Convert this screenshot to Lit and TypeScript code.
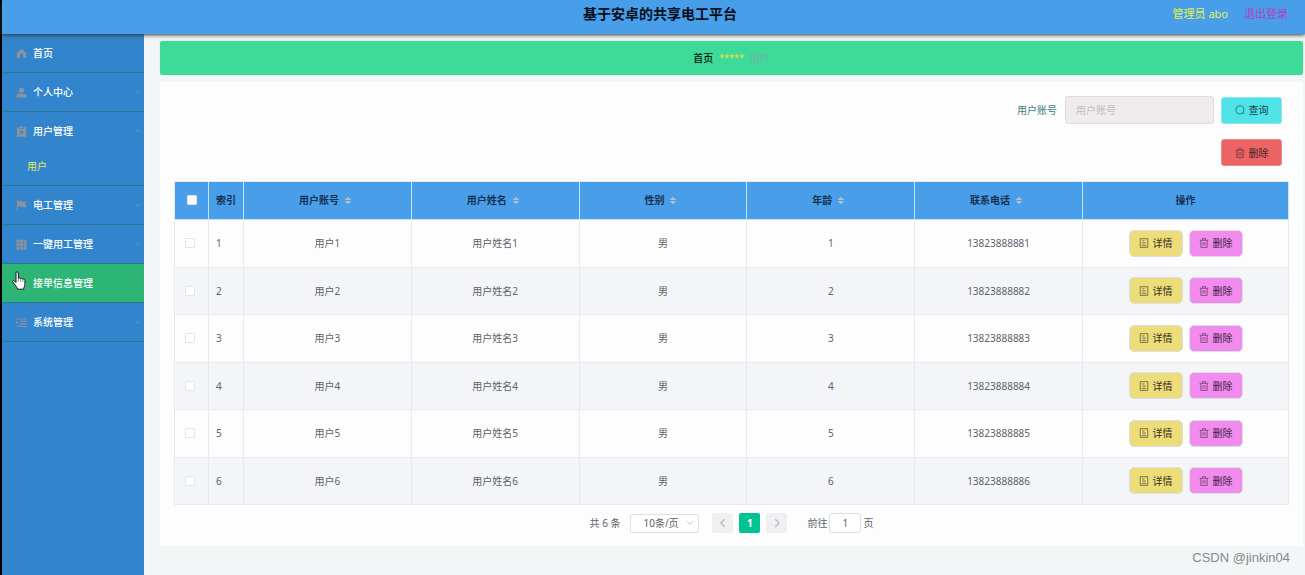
import { LitElement, html, css, svg, nothing } from "lit";
import { customElement, property, state } from "lit/decorators.js";
import { classMap } from "lit/directives/class-map.js";

const icons: Record<string, unknown> = {
  home: svg`<path fill="currentColor" d="M6 1 1 5.4V11h3.4V7.6a1.6 1.6 0 0 1 3.2 0V11H11V5.4z"/>`,
  user: svg`<g fill="currentColor"><circle cx="6" cy="3.6" r="2.8"/><path d="M.6 11.4V9.6C.6 8.2 1.8 7.4 3 7.4h6c1.200 0 2.400.8 2.400 2.200v1.800z"/></g>`,
  claim: svg`<path fill="currentColor" fill-rule="evenodd" d="M1 1.400h2.200V3h5.600V1.400H11V11.600H1zM4 5.100 5.300 6.800 4 8.500l.7.6L6 7.500l1.300 1.600.7-.6-1.300-1.700L8 5.100l-.7-.6L6 6.100 4.700 4.500z"/><path fill="currentColor" d="M4 .4h4v1.800H4z"/>`,
  flag: svg`<path fill="currentColor" d="M1 .6h1.200v.4H7v1h4.400L9.800 5l1.600 3H6V7H2.200v4.800H1z"/>`,
  grid: svg`<path fill="currentColor" d="M.5.800h3.200V4H.5zM4.400.800h3.200V4H4.400zM8.300.800h3.200V4H8.300zM.5 4.600h3.200v3.200H.5zM4.400 4.600h3.200v3.200H4.400zM8.300 4.600h3.200v3.200H8.300zM.5 8.400h3.200v3.200H.5zM4.400 8.400h3.200v3.200H4.400zM8.300 8.400h3.200v3.200H8.300z"/>`,
  goods: svg`<path fill="currentColor" d="M1 3.500h10l.5 8H.5z"/>`,
  list: svg`<path fill="currentColor" d="M.5 1.500h11v1.200H.5zM4.500 4.200h7v1.200h-7zM4.500 6.900h7v1.200h-7zM.5 9.600h11v1.200H.5zM.5 4.200 3 6.100.5 8z"/>`,
  down: svg`<path fill="none" stroke="currentColor" stroke-width="1.300" d="m1.500 3.500 4.500 4.500 4.500-4.500"/>`,
  up: svg`<path fill="none" stroke="currentColor" stroke-width="1.300" d="m1.500 8 4.500-4.500L10.500 8"/>`,
  left: svg`<path fill="none" stroke="currentColor" stroke-width="1.500" d="M8 1.500 3.500 6 8 10.500"/>`,
  right: svg`<path fill="none" stroke="currentColor" stroke-width="1.500" d="M4 1.500 8.500 6 4 10.500"/>`,
  search: svg`<g fill="none" stroke="currentColor" stroke-width=".9"><circle cx="6" cy="5.800" r="4.800"/><path d="m9.400 9.200 1.800 1.800"/></g>`,
  trash: svg`<path fill="none" stroke="currentColor" stroke-width=".9" d="M.8 2.800h10.400M4.200 2.500V.8h3.600v1.700M2.200 3v8.300h7.600V3M4.800 5v4.200M7.200 5v4.200"/>`,
  doc: svg`<path fill="none" stroke="currentColor" stroke-width=".9" d="M1.500.8h9v10.400h-9zM4 3.500h2.500M4 6h4M3.500 8.800h5"/>`,
  sort: svg`<path fill="currentColor" d="M6 .2 11 5.200H1zM6 11.800 1 6.800h10z"/>`,
};

@customElement("ui-icon")
export class UiIcon extends LitElement {
  static styles = css`
    :host { display: inline-flex; flex: none; width: 10px; height: 10px; }
    svg { width: 100%; height: 100%; display: block; }
  `;
  @property() name = "home";
  render() {
    return html`<svg viewBox="0 0 12 12" aria-hidden="true">${icons[this.name]}</svg>`;
  }
}

interface MenuItem { icon: string; label: string; children?: string[]; }

const menu: MenuItem[] = [
  { icon: "home", label: "首页" },
  { icon: "user", label: "个人中心", children: [] },
  { icon: "claim", label: "用户管理", children: ["用户"] },
  { icon: "flag", label: "电工管理", children: [] },
  { icon: "grid", label: "一键用工管理", children: [] },
  { icon: "goods", label: "接单信息管理", children: [] },
  { icon: "list", label: "系统管理", children: [] },
];

const columns = ["用户账号", "用户姓名", "性别", "年龄", "联系电话"];
const rows = [1, 2, 3, 4, 5, 6].map((n) => ({
  index: n,
  account: `用户${n}`,
  name: `用户姓名${n}`,
  gender: "男",
  age: n,
  phone: `1382388888${n}`,
}));

@customElement("app-root")
export class AppRoot extends LitElement {
  static styles = css`
    :host {
      display: flex;
      flex-direction: column;
      position: relative;
      min-height: 100vh;
      box-sizing: border-box;
      border-left: 2px solid #000;
      background: #f2f6f7;
      color: #606266;
      font: 10px/16px "Noto Sans", "Noto Sans CJK SC", sans-serif;
    }
    * { box-sizing: border-box; }
    button, input, select { font: inherit; margin: 0; }
    button { cursor: pointer; }
    a { text-decoration: none; color: inherit; }

    .top {
      display: grid;
      grid-template-columns: 1fr auto 1fr;
      align-items: center;
      height: 34px;
      padding: 0 17px 6px 30px;
      background: #489ee9;
      box-shadow: 0 1px 4px #333;
      z-index: 1;
    }
    .title { grid-column: 2; margin: 0; color: #07101c; font-size: 14px; line-height: 20px; font-weight: 700; }
    .account { display: flex; justify-content: flex-end; gap: 16px; font-size: 11px; }
    .who { color: #e4f24a; }
    .logout { color: #b63fc0; }

    .body { display: flex; flex: 1; }
    .side { width: 142px; flex: none; background: #3285cd; }
    .menu, .sub { list-style: none; margin: 0; padding: 0; }
    .group { border-bottom: 1px solid #2b7791; }
    .entry {
      display: flex;
      align-items: center;
      gap: 6px;
      width: 100%;
      height: 38px;
      padding: 0 2px 0 14px;
      border: 0;
      background: none;
      color: #fff;
      font-weight: 500;
      text-align: left;
    }
    .entry .glyph { width: 11px; height: 11px; color: #8e929c; }
    .entry .arrow { width: 8px; height: 8px; margin-left: auto; color: #6b97bd; }
    .hover { background: #2cb574; }
    .entry:is(.hover *) .arrow { color: #5c9f84; }
    .subentry { display: block; padding: 8px 25px 11px; color: #e2ee62; }

    .main { flex: 1; min-width: 0; padding: 7px 2px 29px 16px; }
    .crumbs {
      display: flex;
      align-items: center;
      justify-content: center;
      gap: 6px;
      height: 34px;
      margin-bottom: 7px;
      border-radius: 3px;
      background: #3dda98;
      box-shadow: 0 0 1px #8aa69a;
    }
    .here { color: #04140d; font-weight: 500; }
    .stars { color: #e8de4c; font-size: 9px; font-weight: 500; }
    .leaf { color: #7cabb4; }

    .card { padding: 14px 14px 13px; background: #fdfdfe; }
    .search { display: flex; align-items: center; justify-content: flex-end; padding-right: 7px; }
    .search label { margin-right: 8px; color: #3a7f7c; }
    .field {
      width: 149px;
      height: 28px;
      margin-right: 7px;
      padding: 0 10px;
      border: 1px solid #dedbe2;
      border-radius: 3px;
      background: #f0ecec;
      color: #606266;
    }
    .field::placeholder { color: #b9bdc6; }
    .tools { display: flex; justify-content: flex-end; padding: 15px 7px 15px 0; }
    .btn {
      display: inline-flex;
      align-items: center;
      justify-content: center;
      gap: 4px;
      height: 27px;
      width: 61px;
      padding: 0;
      border: 1px solid #dcdfe6;
      border-radius: 3px;
      color: #222;
    }
    .btn ui-icon { opacity: 0.8; }
    .query { background: #4fe5e8; border-color: #8fe6ea; color: #173f49; }
    .remove { background: #ec6464; border-color: #eb8a8c; color: #44242a; }
    .act { width: 54px; border-radius: 5px; }
    .detail { background: #ecdd7a; color: #33301c; }
    .drop { background: #f18bee; color: #412544; }

    .grid {
      width: 100%;
      table-layout: fixed;
      border-spacing: 0;
      border-left: 1px solid #e6e9f0;
      border-top: 1px solid #e6e9f0;
    }
    .check { width: 34px; }
    .no { width: 35px; }
    .ops { width: 206px; }
    th, td { padding: 0 0 1px; text-align: center; border-right: 1px solid #e8eaf0; border-bottom: 1px solid #e8eaf0; }
    th { height: 38px; background: #489ee9; color: #16304f; font-weight: 700; border-color: #c8e2f6; }
    td { height: 48px; }
    tr:nth-child(even) td { height: 47px; background: #f3f5f9; }
    .idx { text-align: left; padding-left: 7px; }
    .head { display: flex; align-items: center; justify-content: center; gap: 5px; padding-right: 4px; }
    .head ui-icon { width: 8px; height: 9px; color: #b4bfcc; }
    .acts { display: flex; justify-content: center; gap: 6px; }
    .tick {
      appearance: none;
      display: block;
      width: 10px;
      height: 10px;
      margin: 0 auto 0 10px;
      border: 1px solid #e2e5eb;
      border-radius: 1px;
      background: #fff;
    }
    .tick:checked { background: #00c292; }
    th .tick { margin: 0 auto; }

    .pager { display: flex; align-items: center; justify-content: center; padding-top: 8px; }
    .size { display: grid; align-items: center; margin: 0 13px 0 10px; }
    .size select, .size ui-icon { grid-area: 1 / 1; }
    .size select {
      appearance: none;
      width: 69px;
      height: 19px;
      padding: 0 0 0 12px;
      border: 1px solid #dcdfe6;
      border-radius: 2px;
      background: #fff;
      color: #606266;
    }
    .size ui-icon { justify-self: end; width: 8px; height: 8px; margin-right: 5px; color: #b4b8c0; pointer-events: none; }
    .pages { display: flex; gap: 6px; margin-right: 20px; }
    .page {
      display: flex;
      align-items: center;
      justify-content: center;
      width: 21px;
      height: 20px;
      padding: 0;
      border: 0;
      border-radius: 2px;
      background: #f0f0f2;
      color: #b4b8c0;
    }
    .current { background: #00c292; color: #fff; font-weight: 700; }
    .jump { display: flex; align-items: center; gap: 2px; }
    .jump input {
      width: 32px;
      height: 20px;
      padding: 0;
      border: 1px solid #dcdfe6;
      border-radius: 3px;
      background: #fff;
      color: #606266;
      text-align: center;
    }

    .pointer { position: absolute; left: 10px; top: 271px; width: 14px; height: 19px; z-index: 2; pointer-events: none; }
    .mark {
      position: absolute;
      right: 15px;
      bottom: 7px;
      color: #85888b;
      font: 13px/20px "Liberation Sans", Arial, sans-serif;
    }
  `;

  @state() private hovered = 5;
  @state() private open = new Set([2]);

  private toggle(i: number) {
    const next = new Set(this.open);
    next.has(i) ? next.delete(i) : next.add(i);
    this.open = next;
  }

  private renderItem(item: MenuItem, i: number) {
    const opened = this.open.has(i);
    return html`<li
      class=${classMap({ group: true, hover: this.hovered === i })}
      @mouseenter=${() => (this.hovered = i)}
    >
      ${item.children
        ? html`<button class="entry" aria-expanded=${opened} @click=${() => this.toggle(i)}>
            <ui-icon class="glyph" name=${item.icon}></ui-icon>${item.label}
            <ui-icon class="arrow" name=${opened ? "up" : "down"}></ui-icon>
          </button>`
        : html`<a class="entry" href="#home"><ui-icon class="glyph" name=${item.icon}></ui-icon>${item.label}</a>`}
      ${opened && item.children?.length
        ? html`<ul class="sub">
            ${item.children.map((c) => html`<li><a class="subentry" href="#users">${c}</a></li>`)}
          </ul>`
        : nothing}
    </li>`;
  }

  render() {
    return html`
      <header class="top">
        <h1 class="title">基于安卓的共享电工平台</h1>
        <div class="account"><span class="who">管理员 abo</span><a class="logout" href="#logout">退出登录</a></div>
      </header>
      <div class="body">
        <nav class="side">
          <ul class="menu">${menu.map((m, i) => this.renderItem(m, i))}</ul>
        </nav>
        <main class="main">
          <div class="crumbs">
            <a class="here" href="#home">首页</a><span class="stars">*****</span><span class="leaf">用户</span>
          </div>
          <section class="card">
            <form class="search" @submit=${(e: Event) => e.preventDefault()}>
              <label for="account">用户账号</label>
              <input class="field" id="account" placeholder="用户账号" />
              <button class="btn query"><ui-icon name="search"></ui-icon>查询</button>
            </form>
            <div class="tools">
              <button class="btn remove"><ui-icon name="trash"></ui-icon>删除</button>
            </div>
            <table class="grid">
              <colgroup>
                <col class="check" /><col class="no" />
                ${columns.map(() => html`<col />`)}
                <col class="ops" />
              </colgroup>
              <thead>
                <tr>
                  <th><input class="tick" type="checkbox" aria-label="全选" /></th>
                  <th>索引</th>
                  ${columns.map((c) => html`<th><div class="head">${c}<ui-icon name="sort"></ui-icon></div></th>`)}
                  <th>操作</th>
                </tr>
              </thead>
              <tbody>
                ${rows.map(
                  (r) => html`<tr>
                    <td><input class="tick" type="checkbox" aria-label=${r.account} /></td>
                    <td class="idx">${r.index}</td>
                    <td>${r.account}</td>
                    <td>${r.name}</td>
                    <td>${r.gender}</td>
                    <td>${r.age}</td>
                    <td>${r.phone}</td>
                    <td>
                      <div class="acts">
                        <button class="btn act detail"><ui-icon name="doc"></ui-icon>详情</button>
                        <button class="btn act drop"><ui-icon name="trash"></ui-icon>删除</button>
                      </div>
                    </td>
                  </tr>`
                )}
              </tbody>
            </table>
            <div class="pager">
              <span>共 6 条</span>
              <div class="size">
                <select aria-label="每页条数"><option>10条/页</option></select>
                <ui-icon name="down"></ui-icon>
              </div>
              <div class="pages">
                <button class="page" aria-label="上一页"><ui-icon name="left"></ui-icon></button>
                <button class="page current">1</button>
                <button class="page" aria-label="下一页"><ui-icon name="right"></ui-icon></button>
              </div>
              <div class="jump"><label for="goto">前往</label><input id="goto" value="1" /><span>页</span></div>
            </div>
          </section>
        </main>
      </div>
      <svg class="pointer" viewBox="0 0 14 19" aria-hidden="true">
        <path fill="#fff" stroke="#1a1a1a" stroke-linejoin="round"
          d="M4 11.500V2a1.200 1.200 0 0 1 2.400 0v5.500c.2-1 2.200-.9 2.300.3.400-.8 2.200-.6 2.200.6.600-.6 2-.3 2 .9v4.200c0 2-1.200 2.600-1.200 4.700H5.500c0-2-3-4.400-4.800-7.400C.2 9.900 1.600 9.200 2.500 10z"/>
        <path fill="none" stroke="#555" stroke-width=".6" d="M6.400 7.500V11M8.700 8v3M10.900 8.600V11"/>
      </svg>
      <span class="mark">CSDN @jinkin04</span>
    `;
  }
}
